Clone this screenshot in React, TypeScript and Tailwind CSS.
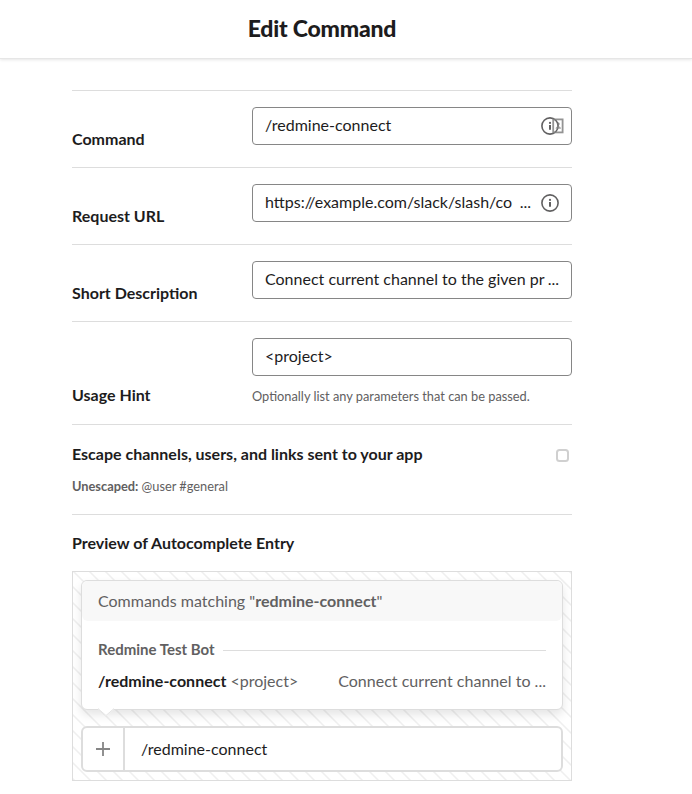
import type { ReactNode } from "react";

function InfoIcon({ className = "" }: { className?: string }) {
  return (
    <svg viewBox="0 0 20 20" className={`h-5 w-5 shrink-0 ${className}`} fill="none">
      <circle cx="10" cy="10" r="8.1" stroke="#616061" strokeWidth="1.6" />
      <circle cx="10" cy="6.9" r="1.1" fill="#616061" />
      <path d="M9 9h2v4.8H9z" fill="#616061" />
    </svg>
  );
}

function ContactsIcon() {
  return (
    <svg viewBox="0 0 12 16" className="absolute top-[10px] right-[7px] h-4 w-3" fill="none">
      <rect x="1.2" y="1.4" width="9.4" height="13" stroke="#808080" strokeOpacity="0.85" strokeWidth="1.8" />
      <circle cx="6.3" cy="6" r="1.4" fill="#777" fillOpacity="0.75" />
      <path d="M3.6 10.8c0-1.8 1.2-2.6 2.7-2.6S9 9 9 10.8z" fill="#858585" fillOpacity="0.75" />
    </svg>
  );
}

function Field({ children }: { children: ReactNode }) {
  return (
    <div className="relative flex h-[38px] w-[320px] items-center rounded-[4px] border border-[#868686] bg-white pl-3 text-[16px] leading-5 whitespace-nowrap">
      {children}
    </div>
  );
}

function Row({ label, children }: { label: string; children: ReactNode }) {
  return (
    <div className="flex h-[77px] items-start border-t border-[#dddddd] pt-4">
      <div className="w-[180px] shrink-0 pt-5 text-[16px] leading-6 font-bold">{label}</div>
      {children}
    </div>
  );
}

export default function App() {
  return (
    <div className="h-[794px] w-full overflow-hidden bg-white font-['Lato',sans-serif] text-[#1d1c1d]">
      <header className="flex h-[59px] w-full border-b border-[#e6e6e6] shadow-[0_1px_3px_rgba(0,0,0,0.10)]">
        <h1 className="w-[644px] pt-3 text-center text-[23px] leading-8 font-black tracking-[-0.2px]">Edit Command</h1>
      </header>
      <main className="ml-[72px] w-[500px] pt-[31px]">
        <Row label="Command">
          <Field>
            <span className="pb-0.5">/redmine-connect</span>
            <InfoIcon className="absolute top-2 right-[11px]" />
            <ContactsIcon />
          </Field>
        </Row>
        <Row label="Request URL">
          <Field>
            <span className="flex-1 pb-0.5">https://example.com/slack/slash/co</span>
            <span className="mr-[9px] pb-0.5">...</span>
            <InfoIcon className="mr-[11px]" />
          </Field>
        </Row>
        <Row label="Short Description">
          <Field>
            <span className="flex-1 pb-0.5">Connect current channel to the given pr</span>
            <span className="mr-3 pb-0.5">...</span>
          </Field>
        </Row>
        <div className="flex h-[103px] border-t border-[#dddddd] pt-4">
          <div className="w-[180px] shrink-0 pt-[45px] text-[16px] leading-6 font-bold">Usage Hint</div>
          <div>
            <Field><span className="pb-0.5">&lt;project&gt;</span></Field>
            <p className="mt-2.5 text-[12.8px] leading-5 text-[#616061]">Optionally list any parameters that can be passed.</p>
          </div>
        </div>
        <section className="h-[90px] border-t border-[#dddddd] pt-[17px]">
          <div className="flex items-center justify-between pr-[3px]">
            <span className="text-[16px] leading-6 font-bold">Escape channels, users, and links sent to your app</span>
            <span className="mt-0.5 h-[13px] w-[13px] rounded-[3.5px] border-2 border-[#d0d0d0] bg-white" />
          </div>
          <p className="mt-2.5 text-[12.8px] leading-5 text-[#616061]"><b>Unescaped:</b> @user #general</p>
        </section>
        <section className="border-t border-[#dddddd] pt-4">
          <h2 className="text-[16px] leading-6 font-bold">Preview of Autocomplete Entry</h2>
          <div className="mt-4 h-[210px] border border-[#dddddd] bg-[linear-gradient(45deg,#efefef_2%,transparent_5%,transparent_45%,#efefef_48%,#efefef_52%,transparent_55%,transparent_95%,#efefef_98%)] bg-[length:16px_16px] bg-[position:0_-1px] px-2 pt-2">
            <div className="relative h-[130px] rounded-[6px] border border-[#dddddd] bg-white text-[16px] leading-6 text-[#616061] shadow-[0_5px_10px_rgba(0,0,0,0.10)]">
              <div className="h-10 rounded-[6px] bg-[#f8f8f8] px-4 pt-2">Commands matching "<b>redmine-connect</b>"</div>
              <div className="mx-4 mt-4 flex items-center gap-2 text-[15px]">
                <b>Redmine Test Bot</b>
                <span className="mt-[2px] h-px flex-1 bg-[#dddddd]" />
              </div>
              <div className="mx-4 mt-2 flex justify-between">
                <span><b className="text-[#1d1c1d]">/redmine-connect</b> &lt;project&gt;</span>
                <span className="tracking-[0.02px]">Connect current channel to ...</span>
              </div>
              <svg viewBox="0 0 16 9" className="absolute -bottom-[8px] left-4 h-[9px] w-4">
                <path d="M0 0h16v1L8 8 0 1z" fill="#fff" />
                <path d="M0 .5l8 7 8-7" fill="none" stroke="#e4e4e4" />
              </svg>
            </div>
            <div className="mt-4 flex h-[46px] rounded-[6px] border-2 border-[#dddddd] bg-white text-[16px] leading-6">
              <div className="flex w-[42px] items-center justify-center border-r-2 border-[#dddddd]">
                <svg viewBox="0 0 14 14" className="h-3.5 w-3.5" stroke="#868686" strokeWidth="1.8">
                  <path d="M7 0v14M0 7h14" />
                </svg>
              </div>
              <span className="pt-[9px] pl-4">/redmine-connect</span>
            </div>
          </div>
        </section>
      </main>
    </div>
  );
}
